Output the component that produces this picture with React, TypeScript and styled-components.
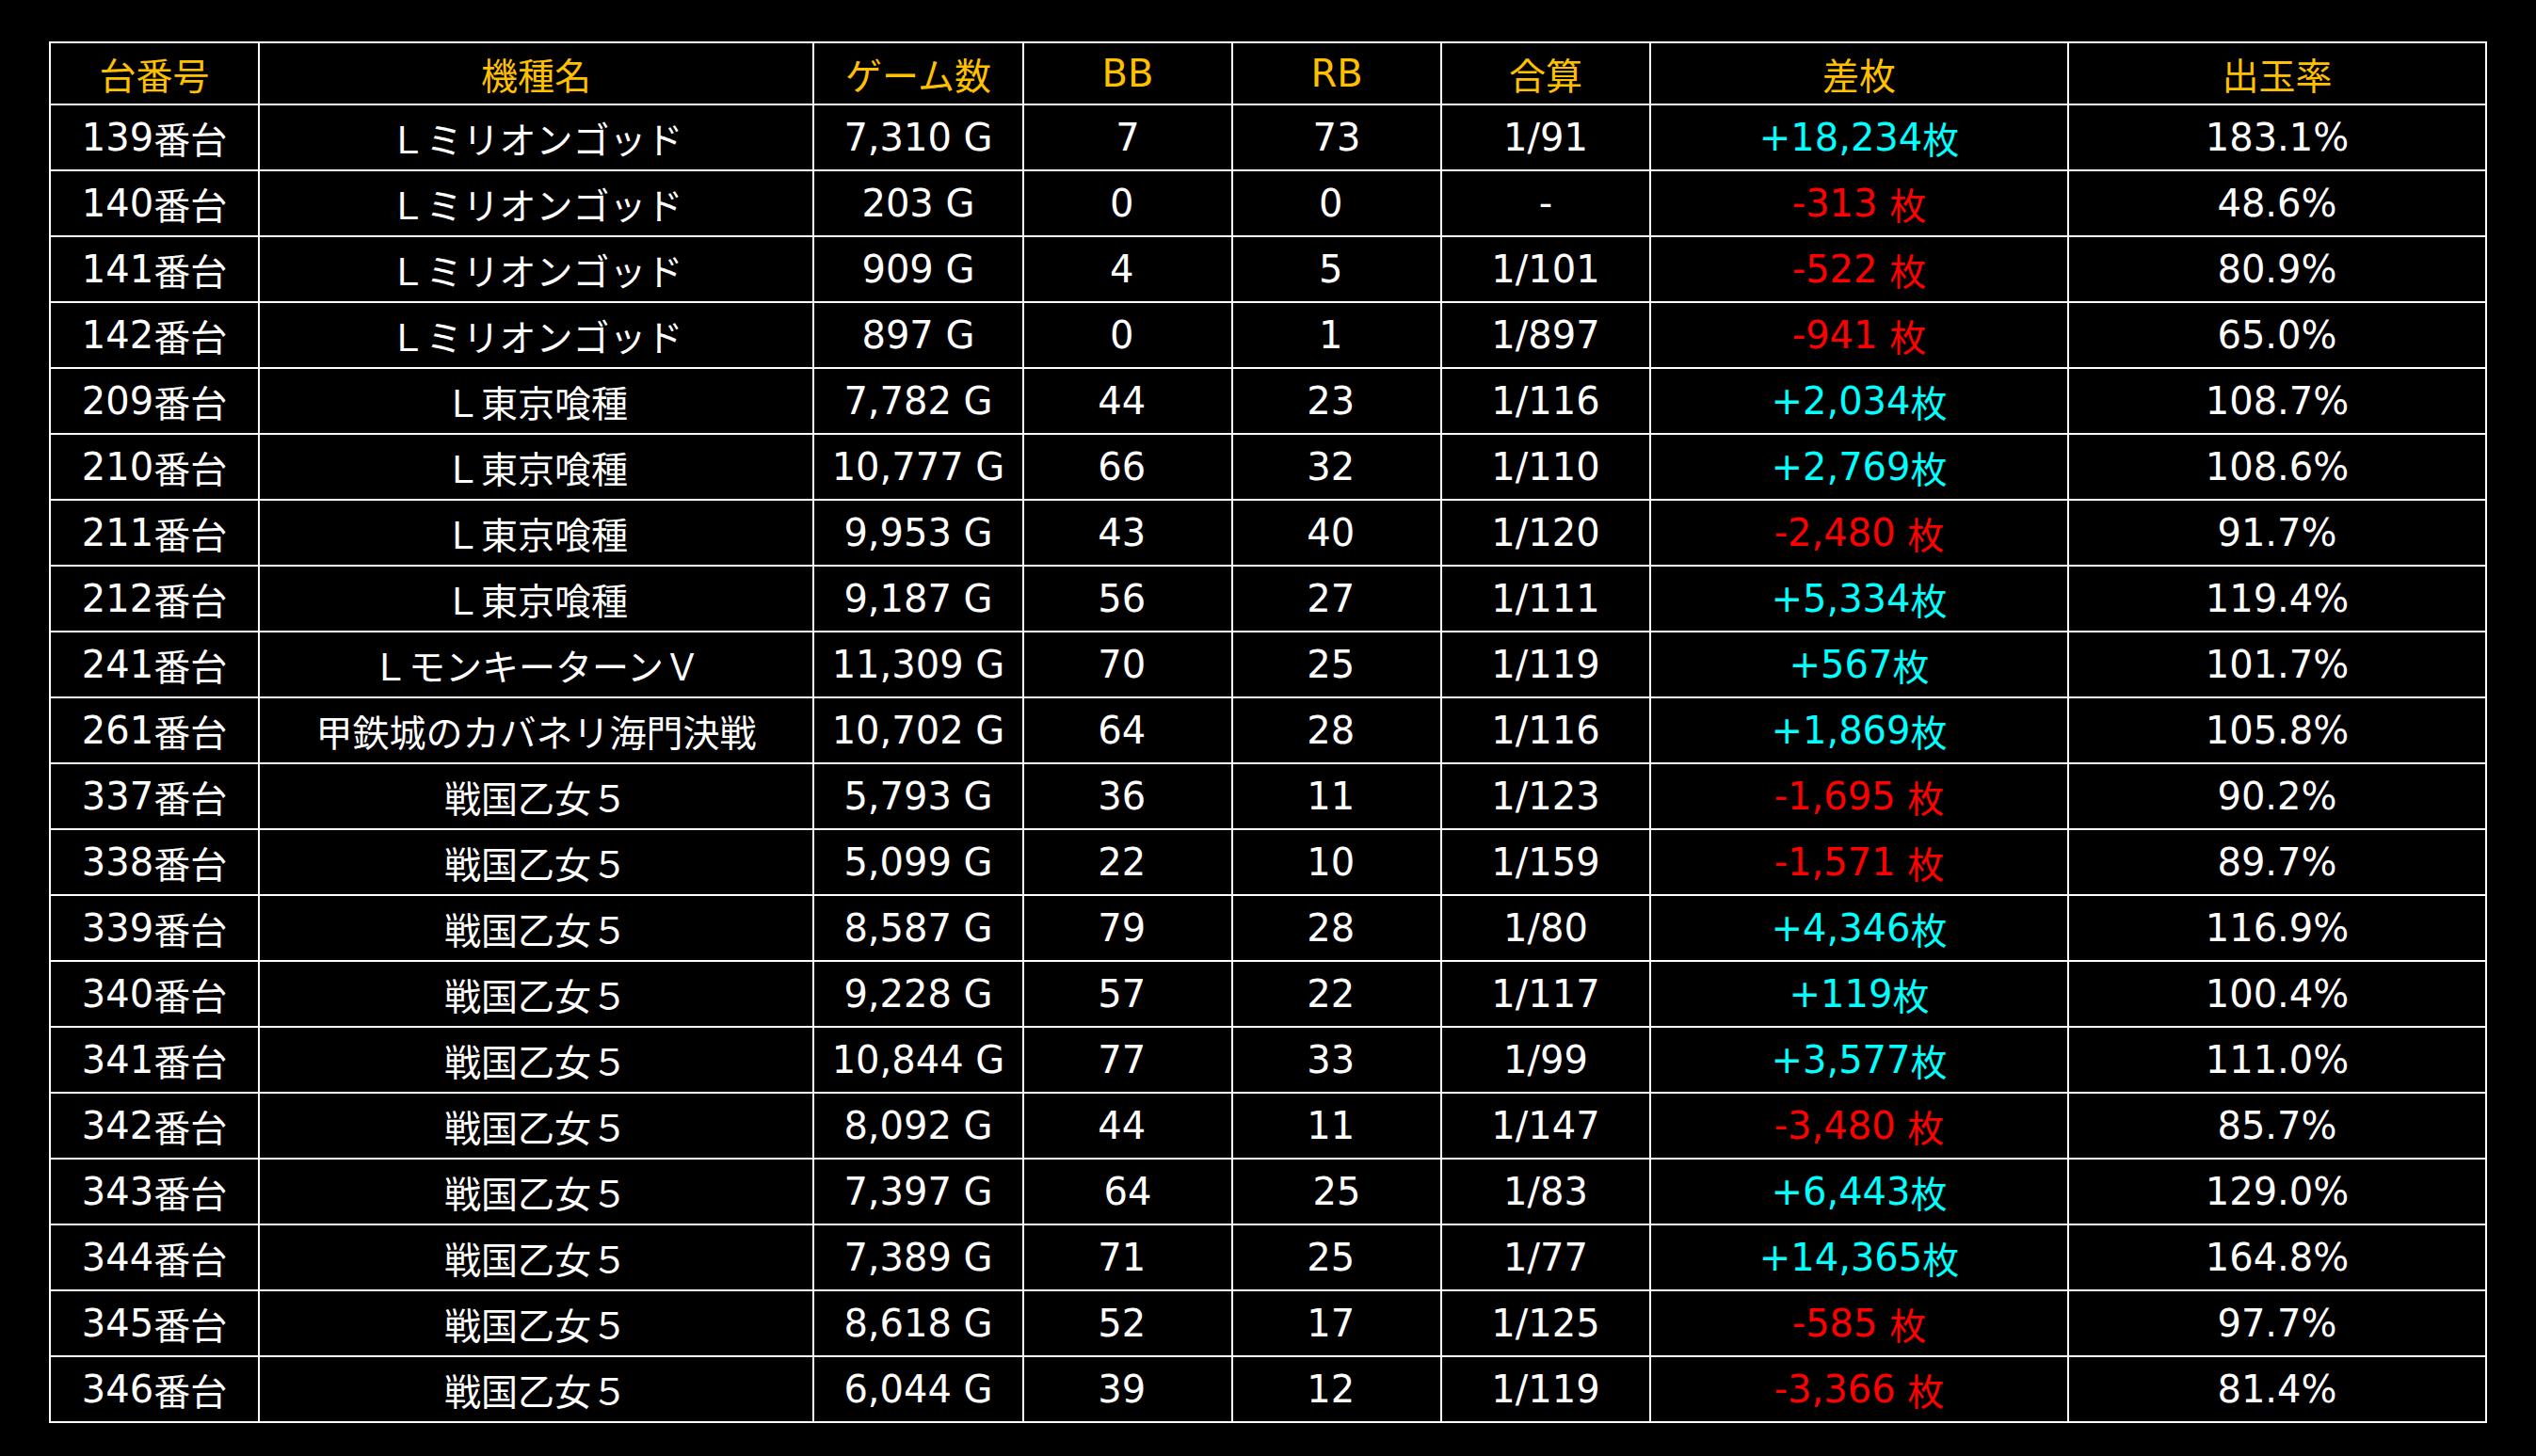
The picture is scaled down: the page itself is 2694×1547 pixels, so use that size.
import React from "react";
import styled, { createGlobalStyle } from "styled-components";

const GlobalStyle = createGlobalStyle`
  html, body {
    margin: 0;
    padding: 0;
    background: #000;
  }
  body {
    font-family: "DejaVu Sans", "Noto Sans CJK JP", sans-serif;
  }
`;

const Page = styled.main`
  min-height: 100vh;
  background: #000;
  padding: 44px 0 0 52px;
  box-sizing: border-box;
`;

const Grid = styled.div`
  display: grid;
  grid-template-columns: 220px 587px 221px 220px 220px 220px 442px 442px;
  grid-template-rows: 64px repeat(20, 68px);
  gap: 2px;
  padding: 2px;
  width: fit-content;
  background: #ffffff;
`;

type Tone = "head" | "plain" | "pos" | "neg";

const toneColor: Record<Tone, string> = {
  head: "#ffc000",
  plain: "#ffffff",
  pos: "#00ffff",
  neg: "#ff0000",
};

const Cell = styled.div<{ $tone: Tone }>`
  display: flex;
  align-items: center;
  justify-content: center;
  background: #000;
  color: ${(p) => toneColor[p.$tone]};
  font-family: "DejaVu Sans", "Noto Sans CJK JP", sans-serif;
  font-size: 40px;
  font-weight: 400;
  line-height: normal;
  white-space: pre;
`;

const Wide = styled.span`
  font-family: "Noto Sans CJK JP", sans-serif;
  font-size: 39px;
`;

const CJK = /([\u3000-\u30ff\u3400-\u9fff\uff00-\uffef]+)/;

function Text({ value }: { value: string }) {
  const parts = value.split(CJK).filter((s) => s.length > 0);
  return (
    <>
      {parts.map((part, i) =>
        CJK.test(part) ? <Wide key={i}>{part}</Wide> : <React.Fragment key={i}>{part}</React.Fragment>
      )}
    </>
  );
}

const headers = ["台番号", "機種名", "ゲーム数", "BB", "RB", "合算", "差枚", "出玉率"];

type Row = {
  no: string;
  name: string;
  games: string;
  bb: string;
  rb: string;
  total: string;
  diff: string;
  rate: string;
};

const L = "Ｌミリオンゴッド";
const T = "Ｌ東京喰種";
const S = "戦国乙女５";

const rows: Row[] = [
  { no: "139番台", name: L, games: "7,310 G", bb: "7", rb: "73", total: "1/91", diff: "+18,234枚", rate: "183.1%" },
  { no: "140番台", name: L, games: "203 G", bb: "0 ", rb: "0 ", total: "-", diff: "-313 枚", rate: "48.6%" },
  { no: "141番台", name: L, games: "909 G", bb: "4 ", rb: "5 ", total: "1/101", diff: "-522 枚", rate: "80.9%" },
  { no: "142番台", name: L, games: "897 G", bb: "0 ", rb: "1 ", total: "1/897", diff: "-941 枚", rate: "65.0%" },
  { no: "209番台", name: T, games: "7,782 G", bb: "44 ", rb: "23 ", total: "1/116", diff: "+2,034枚", rate: "108.7%" },
  { no: "210番台", name: T, games: "10,777 G", bb: "66 ", rb: "32 ", total: "1/110", diff: "+2,769枚", rate: "108.6%" },
  { no: "211番台", name: T, games: "9,953 G", bb: "43 ", rb: "40 ", total: "1/120", diff: "-2,480 枚", rate: "91.7%" },
  { no: "212番台", name: T, games: "9,187 G", bb: "56 ", rb: "27 ", total: "1/111", diff: "+5,334枚", rate: "119.4%" },
  { no: "241番台", name: "ＬモンキーターンＶ", games: "11,309 G", bb: "70 ", rb: "25 ", total: "1/119", diff: "+567枚", rate: "101.7%" },
  { no: "261番台", name: "甲鉄城のカバネリ海門決戦", games: "10,702 G", bb: "64 ", rb: "28 ", total: "1/116", diff: "+1,869枚", rate: "105.8%" },
  { no: "337番台", name: S, games: "5,793 G", bb: "36 ", rb: "11 ", total: "1/123", diff: "-1,695 枚", rate: "90.2%" },
  { no: "338番台", name: S, games: "5,099 G", bb: "22 ", rb: "10 ", total: "1/159", diff: "-1,571 枚", rate: "89.7%" },
  { no: "339番台", name: S, games: "8,587 G", bb: "79 ", rb: "28 ", total: "1/80", diff: "+4,346枚", rate: "116.9%" },
  { no: "340番台", name: S, games: "9,228 G", bb: "57 ", rb: "22 ", total: "1/117", diff: "+119枚", rate: "100.4%" },
  { no: "341番台", name: S, games: "10,844 G", bb: "77 ", rb: "33 ", total: "1/99", diff: "+3,577枚", rate: "111.0%" },
  { no: "342番台", name: S, games: "8,092 G", bb: "44 ", rb: "11 ", total: "1/147", diff: "-3,480 枚", rate: "85.7%" },
  { no: "343番台", name: S, games: "7,397 G", bb: "64", rb: "25", total: "1/83", diff: "+6,443枚", rate: "129.0%" },
  { no: "344番台", name: S, games: "7,389 G", bb: "71 ", rb: "25 ", total: "1/77", diff: "+14,365枚", rate: "164.8%" },
  { no: "345番台", name: S, games: "8,618 G", bb: "52 ", rb: "17 ", total: "1/125", diff: "-585 枚", rate: "97.7%" },
  { no: "346番台", name: S, games: "6,044 G", bb: "39 ", rb: "12 ", total: "1/119", diff: "-3,366 枚", rate: "81.4%" },
];

export default function App() {
  return (
    <>
      <GlobalStyle />
      <Page>
        <Grid role="table">
          {headers.map((h) => (
            <Cell key={h} $tone="head" role="columnheader">
              <Text value={h} />
            </Cell>
          ))}
          {rows.map((r) => (
            <React.Fragment key={r.no}>
              <Cell $tone="plain"><Text value={r.no} /></Cell>
              <Cell $tone="plain"><Text value={r.name} /></Cell>
              <Cell $tone="plain">{r.games}</Cell>
              <Cell $tone="plain">{r.bb}</Cell>
              <Cell $tone="plain">{r.rb}</Cell>
              <Cell $tone="plain">{r.total}</Cell>
              <Cell $tone={r.diff.startsWith("+") ? "pos" : "neg"}><Text value={r.diff} /></Cell>
              <Cell $tone="plain">{r.rate}</Cell>
            </React.Fragment>
          ))}
        </Grid>
      </Page>
    </>
  );
}
